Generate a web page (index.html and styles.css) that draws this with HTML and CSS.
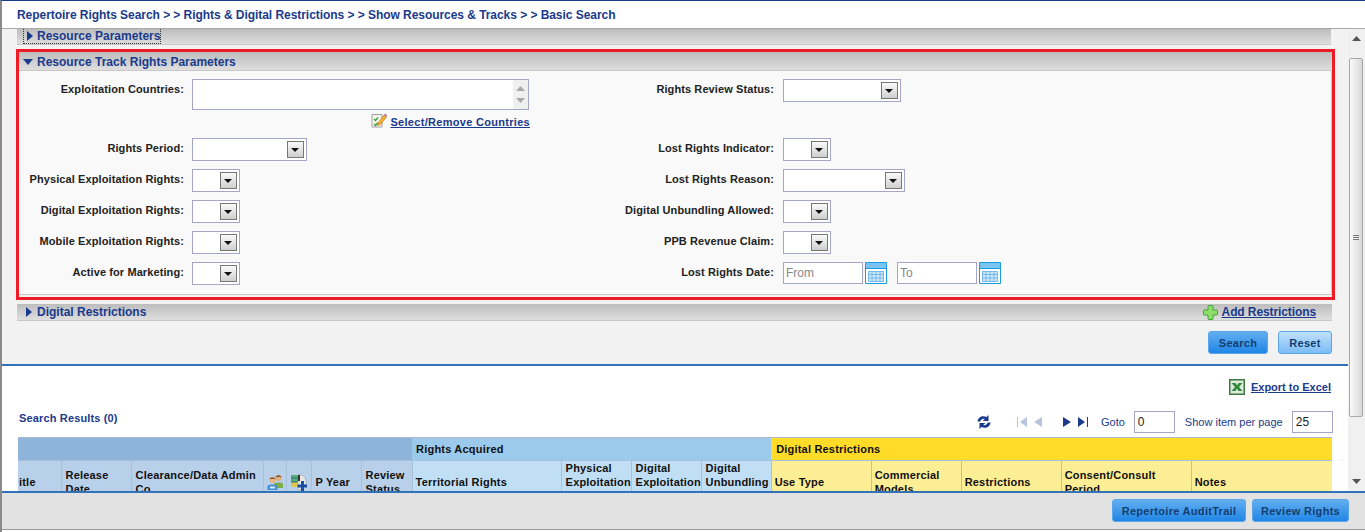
FILE: index.html
```html
<!DOCTYPE html>
<html lang="en">
<head>
    <meta charset="UTF-8">
    <title>Repertoire Rights Search</title>
    <link rel="stylesheet" href="styles.css">
</head>
<body>
    <div class="crumbs">Repertoire Rights Search &gt; &gt; Rights &amp; Digital Restrictions &gt; &gt; Show Resources &amp; Tracks &gt; &gt; Basic Search</div>

    <div class="middle">
        <div class="scroll-area">
            <div class="search-section">
                <div class="bar bar-first">
                    <span class="focus-box">
                        <svg class="tri" width="7" height="10" viewBox="0 0 7 10"><path d="M1 0L7 5L1 10Z"/></svg>
                        <span>Resource Parameters</span>
                    </span>
                </div>

                <div class="highlight">
                    <div class="bar bar-open">
                        <svg class="tri" width="10" height="7" viewBox="0 0 10 7"><path d="M0 1H10L5 7Z"/></svg>
                        <span>Resource Track Rights Parameters</span>
                    </div>
                    <div class="form-grid">
                        <label class="lbl">Exploitation Countries:</label>
                        <div class="field">
                            <div class="listbox">
                                <div class="listbox-bar">
                                    <svg width="9" height="5" viewBox="0 0 9 5"><path d="M0 5L4.500 0L9 5Z"/></svg>
                                    <svg width="9" height="5" viewBox="0 0 9 5"><path d="M0 0L4.500 5L9 0Z"/></svg>
                                </div>
                            </div>
                            <div class="select-link">
                                <svg class="note-icon" width="16" height="16" viewBox="0 0 16 16">
                                    <path d="M1 2.500H11V15H1Z" fill="#f4f4ee" stroke="#a0a0a0"/>
                                    <path d="M3 7L4.500 8.500L7 5.500M3 12L4.500 13.500L7 10.500" fill="none" stroke="#3a9a3a" stroke-width="1.200"/>
                                    <path d="M7 11L13 3L15.500 5L9.500 12.500L6.500 13.500Z" fill="#f0b030" stroke="#b87818" stroke-width=".6"/>
                                    <path d="M13 3L14.200 1.500L16 3.200L15.500 5Z" fill="#c070b0"/>
                                </svg>
                                <a href="#">Select/Remove Countries</a>
                            </div>
                        </div>
                        <label class="lbl">Rights Review Status:</label>
                        <div class="field-r"><div class="combo combo-118"><span class="combo-btn"></span></div></div>

                        <label class="lbl">Rights Period:</label>
                        <div class="field"><div class="combo combo-115"><span class="combo-btn"></span></div></div>
                        <label class="lbl">Lost Rights Indicator:</label>
                        <div class="field-r"><div class="combo"><span class="combo-btn"></span></div></div>

                        <label class="lbl">Physical Exploitation Rights:</label>
                        <div class="field"><div class="combo"><span class="combo-btn"></span></div></div>
                        <label class="lbl">Lost Rights Reason:</label>
                        <div class="field-r"><div class="combo combo-122"><span class="combo-btn"></span></div></div>

                        <label class="lbl">Digital Exploitation Rights:</label>
                        <div class="field"><div class="combo"><span class="combo-btn"></span></div></div>
                        <label class="lbl">Digital Unbundling Allowed:</label>
                        <div class="field-r"><div class="combo"><span class="combo-btn"></span></div></div>

                        <label class="lbl">Mobile Exploitation Rights:</label>
                        <div class="field"><div class="combo"><span class="combo-btn"></span></div></div>
                        <label class="lbl">PPB Revenue Claim:</label>
                        <div class="field-r"><div class="combo"><span class="combo-btn"></span></div></div>

                        <label class="lbl">Active for Marketing:</label>
                        <div class="field"><div class="combo"><span class="combo-btn"></span></div></div>
                        <label class="lbl">Lost Rights Date:</label>
                        <div class="field-r date-row">
                            <input class="date-input" type="text" placeholder="From">
                            <svg class="cal" width="22" height="22" viewBox="0 0 22 22">
                                <path d="M.5 .5H21.500V21.500H.5Z" fill="#fff" stroke="#1a9ae0"/>
                                <path d="M1 1H21V6H1Z" fill="#7cc4f4"/>
                                <path d="M1 6.500H21" stroke="#1a9ae0"/>
                                <path d="M3.500 9.500H18.500V19.500H3.500ZM3.500 12.500H18.500M3.500 16H18.500M7 9.500V19.500M11 9.500V19.500M15 9.500V19.500" fill="#cfe6fa" stroke="#74b8ee"/>
                            </svg>
                            <input class="date-input date-to" type="text" placeholder="To">
                            <svg class="cal" width="22" height="22" viewBox="0 0 22 22">
                                <path d="M.5 .5H21.500V21.500H.5Z" fill="#fff" stroke="#1a9ae0"/>
                                <path d="M1 1H21V6H1Z" fill="#7cc4f4"/>
                                <path d="M1 6.500H21" stroke="#1a9ae0"/>
                                <path d="M3.500 9.500H18.500V19.500H3.500ZM3.500 12.500H18.500M3.500 16H18.500M7 9.500V19.500M11 9.500V19.500M15 9.500V19.500" fill="#cfe6fa" stroke="#74b8ee"/>
                            </svg>
                        </div>
                    </div>
                </div>

                <div class="bar bar-digital">
                    <svg class="tri" width="7" height="10" viewBox="0 0 7 10"><path d="M1 0L7 5L1 10Z"/></svg>
                    <span class="bar-title">Digital Restrictions</span>
                    <svg width="15" height="15" viewBox="0 0 15 15"><path d="M5.500 .5H9.500C10 .5 10 1 10 1.500V5H13.500C14.500 5 14.500 5.500 14.500 6V9C14.500 9.500 14.500 10 13.500 10H10V13.500C10 14 10 14.500 9.500 14.500H5.500C5 14.500 5 14 5 13.500V10H1.500C.5 10 .5 9.500 .5 9V6C.5 5.500 .5 5 1.500 5H5V1.500C5 1 5 .5 5.500 .5Z" fill="#8ede6a" stroke="#3fa53a"/></svg>
                    <a class="add-link" href="#">Add Restrictions</a>
                </div>

                <div class="search-btns">
                    <button class="btn btn-dark" type="button">Search</button>
                    <button class="btn btn-light" type="button">Reset</button>
                </div>
            </div>

            <div class="results">
                <div class="export-row">
                    <svg width="16" height="16" viewBox="0 0 16 16">
                        <path d="M0 0H16V16H0Z" fill="#3e7a3e"/>
                        <path d="M1.500 1.500H14.500V14.500H1.500Z" fill="#dfe9dc"/>
                        <path d="M2.500 4H6.500L8 6.500L9.500 4H13.500L10 8L13.500 12H9.500L8 9.500L6.500 12H2.500L6 8Z" fill="#2f8a3a"/>
                    </svg>
                    <a href="#">Export to Excel</a>
                </div>
                <div class="toolbar">
                    <span class="results-title">Search Results (0)</span>
                    <svg class="refresh" width="14" height="14" viewBox="0 0 14 14">
                        <path d="M.5 6.500C1 2 5.500 0 9.500 2L11.500 0V6H5.500L7.800 3.900C6 3.300 3.800 4.300 3.300 6.500Z" fill="#1a3a8c"/>
                        <path d="M13.500 7.500C13 12 8.500 14 4.500 12L2.500 14V8H8.500L6.200 10.100C8 10.700 10.200 9.700 10.700 7.500Z" fill="#1a3a8c"/>
                    </svg>
                    <svg class="pg-first" width="10" height="10" viewBox="0 0 10 10"><path d="M0 0H1V10H0ZM3 5L10 0V10Z" fill="#b8c4de"/></svg>
                    <svg class="pg-prev" width="8" height="10" viewBox="0 0 8 10"><path d="M0 5L8 0V10Z" fill="#b8c4de"/></svg>
                    <svg class="pg-next" width="8" height="10" viewBox="0 0 8 10"><path d="M8 5L0 0V10Z" fill="#1a3a8c"/></svg>
                    <svg class="pg-last" width="10" height="10" viewBox="0 0 10 10"><path d="M10 0H9V10H10ZM7 5L0 0V10Z" fill="#1a3a8c"/></svg>
                    <span class="goto">Goto</span>
                    <input class="pg-input" type="text" value="0">
                    <span class="per-page">Show item per page</span>
                    <input class="pg-input" type="text" value="25">
                </div>

                <table class="grid">
                    <colgroup>
                        <col class="c43"><col class="c70"><col class="c132"><col class="c23"><col class="c25"><col class="c50"><col class="c51">
                        <col class="c149"><col class="c70"><col class="c70"><col class="c70">
                        <col class="c100"><col class="c90"><col class="c100"><col class="c130"><col class="c141">
                    </colgroup>
                    <tr class="group-row">
                        <th class="g-blank" colspan="7"></th>
                        <th class="g-rights" colspan="4">Rights Acquired</th>
                        <th class="g-digital" colspan="5">Digital Restrictions</th>
                    </tr>
                    <tr class="head-row">
                        <th class="h-blue h-cut">itle</th>
                        <th class="h-blue">Release Date</th>
                        <th class="h-blue">Clearance/Data Admin Co.</th>
                        <th class="h-blue h-icon">
                            <svg width="17" height="17" viewBox="0 0 17 17">
                                <circle cx="11.500" cy="4" r="3" fill="#e0b080"/>
                                <path d="M8.500 3.500C9 .5 14 .5 14.500 3.500C12.500 2.500 10.500 2.500 8.500 3.500Z" fill="#7a4a20"/>
                                <path d="M7 14V9.500C8 8 15 8 16 9.500V14Z" fill="#7fae4a"/>
                                <circle cx="5.500" cy="6" r="3" fill="#e8b888"/>
                                <path d="M2.500 5.500C3 2.500 8 2.500 8.500 5.500C6.500 4.500 4.500 4.500 2.500 5.500Z" fill="#8a5020"/>
                                <path d="M.5 16V11.500C2 10 9 10 10.500 11.500V16Z" fill="#3f8fd8"/>
                                <path d="M3 12.500H8V14.500H3Z" fill="#d8ecfb"/>
                            </svg>
                        </th>
                        <th class="h-blue h-icon">
                            <svg width="17" height="17" viewBox="0 0 17 17">
                                <path d="M8 1H11C15 2 16.500 6 16 10L10 16H8Z" fill="#e8e8e8" stroke="#9a9a9a" stroke-width=".6"/>
                                <path d="M1 1H8V8H1Z" fill="#55b070"/>
                                <path d="M1 8H8V13H1Z" fill="#e0c848"/>
                                <path d="M1 4H8M1 8H8" stroke="#2c6a8a"/>
                                <path d="M8 1H10V7H8Z" fill="#333"/>
                                <path d="M11 7H14V10.500H17V13.500H14V17H11V13.500H7.500V10.500H11Z" fill="#1a4fa0"/>
                            </svg>
                        </th>
                        <th class="h-blue">P Year</th>
                        <th class="h-blue">Review Status</th>
                        <th class="h-sky h-terr">Territorial Rights</th>
                        <th class="h-sky">Physical Exploitation Rights</th>
                        <th class="h-sky">Digital Exploitation Rights</th>
                        <th class="h-sky">Digital Unbundling Allowed</th>
                        <th class="h-yel">Use Type</th>
                        <th class="h-yel">Commercial Models</th>
                        <th class="h-yel">Restrictions</th>
                        <th class="h-yel">Consent/Consult Period</th>
                        <th class="h-yel">Notes</th>
                    </tr>
                </table>
            </div>
        </div>

        <div class="scrollbar">
            <svg class="sb-up" width="9" height="5" viewBox="0 0 9 5"><path d="M0 5L4.500 0L9 5Z"/></svg>
            <div class="sb-thumb"><span class="sb-grip"></span></div>
            <svg class="sb-down" width="9" height="5" viewBox="0 0 9 5"><path d="M0 0L4.500 5L9 0Z"/></svg>
        </div>
    </div>

    <div class="footer">
        <button class="btn btn-dark btn-audit" type="button">Repertoire AuditTrail</button>
        <button class="btn btn-dark btn-review" type="button">Review Rights</button>
    </div>
</body>
</html>
```

FILE: styles.css
```css
html, body {
    margin: 0;
    padding: 0;
}

body {
    width: 1365px;
    height: 532px;
    overflow: hidden;
    display: flex;
    flex-direction: column;
    box-sizing: border-box;
    background: #fff;
    border-top: 1px solid #1a3a8c;
    border-left: 2px solid #8a8a8a;
    font-family: "Liberation Sans", Arial, sans-serif;
    font-size: 11px;
    color: #222;
}

a {
    color: #1a3a8c;
}

svg {
    display: block;
    flex: none;
}

.crumbs {
    height: 28px;
    box-sizing: border-box;
    padding: 7px 0 0 15px;
    border-bottom: 1px solid #a8a8a8;
    font-size: 12px;
    font-weight: bold;
    line-height: 14px;
    letter-spacing: -0.05px;
    color: #1a3a8c;
}

.middle {
    display: flex;
    height: 462px;
}

.scroll-area {
    width: 1346px;
    overflow: hidden;
}

.search-section {
    height: 337px;
    box-sizing: border-box;
    padding: 0 16px 0 14px;
    background: #f2f2f2;
    border-bottom: 2px solid #3272b8;
}

.bar {
    display: flex;
    align-items: center;
    background: linear-gradient(#bdbdbd, #dedede);
    border-bottom: 1px solid #c8c8c8;
    font-size: 12px;
    font-weight: bold;
    color: #1a3a8c;
}

.tri {
    fill: #1a3a8c;
}

.bar-first {
    height: 16px;
    box-sizing: border-box;
    margin: 0 1px;
    padding-left: 6px;
}

.focus-box {
    display: flex;
    align-items: center;
    gap: 4px;
    height: 15px;
    box-sizing: border-box;
    padding-left: 2px;
    border: 1px dotted #333;
    border-width: 0 1px 1px;
}

.highlight {
    margin: 4px -3px 0 0;
    padding-bottom: 2px;
    border: 3px solid #ee1c25;
    background: #f2f2f2;
}

.bar-open {
    gap: 4px;
    height: 19px;
    box-sizing: border-box;
    padding: 1px 0 0 4px;
}

.form-grid {
    display: grid;
    grid-template-columns: 165px 416px 174px 1fr;
    grid-template-rows: 59px repeat(5, 31px);
    height: 224px;
    box-sizing: border-box;
    padding-top: 8px;
    background: #f9f9f9;
    border-bottom: 1px solid #c8c8c8;
    border-right: 1px solid #c8c8c8;
}

.lbl {
    padding-top: 4px;
    text-align: right;
    font-weight: bold;
    line-height: 13px;
    letter-spacing: 0.1px;
}

.field {
    padding-left: 8px;
}

.field-r {
    padding-left: 9px;
}

.listbox {
    display: flex;
    justify-content: flex-end;
    width: 337px;
    height: 31px;
    box-sizing: border-box;
    border: 1px solid #a5a5c8;
    background: #fff;
}

.listbox-bar {
    display: flex;
    flex-direction: column;
    justify-content: space-between;
    align-items: center;
    width: 15px;
    box-sizing: border-box;
    padding: 6px 0;
    background: #f0f0f0;
    fill: #a8a8a8;
}

.select-link {
    display: flex;
    justify-content: flex-end;
    align-items: center;
    gap: 3px;
    width: 338px;
    height: 16px;
    margin-top: 4px;
    font-weight: bold;
    letter-spacing: 0.3px;
}

.note-icon {
    margin-bottom: 4px;
}

.combo {
    display: flex;
    justify-content: flex-end;
    align-items: center;
    width: 48px;
    height: 23px;
    box-sizing: border-box;
    padding-right: 2px;
    border: 1px solid #a5a5c8;
    background: #fff;
}

.combo-115 {
    width: 115px;
}

.combo-118 {
    width: 118px;
}

.combo-122 {
    width: 122px;
}

.combo-btn {
    position: relative;
    width: 17px;
    height: 17px;
    box-sizing: border-box;
    border: 1px solid #777;
    background: linear-gradient(#fafafa, #cfcfcf);
}

.combo-btn::after {
    content: "";
    position: absolute;
    left: 3px;
    top: 6px;
    border-style: solid;
    border-width: 4px 4px 0;
    border-color: #111 transparent transparent;
}

.date-row {
    display: flex;
    gap: 2px;
}

.date-input {
    width: 80px;
    height: 22px;
    box-sizing: border-box;
    padding: 0 2px;
    border: 1px solid #a5a5c8;
    font-family: inherit;
    font-size: 12px;
}

.date-input::placeholder {
    color: #888;
}

.date-to {
    margin-left: 8px;
}

.bar-digital {
    gap: 5px;
    height: 17px;
    margin: 4px 0 0 1px;
    padding-left: 8px;
    box-sizing: border-box;
}

.bar-title {
    flex: 1;
}

.add-link {
    margin: 0 16px 0 -1px;
    letter-spacing: -0.1px;
}

.search-btns {
    display: flex;
    justify-content: flex-end;
    gap: 10px;
    margin-top: 10px;
}

.btn {
    height: 23px;
    padding: 0;
    border: 1px solid #5aa5ea;
    border-radius: 3px;
    font-family: inherit;
    font-size: 11px;
    font-weight: bold;
    letter-spacing: 0.3px;
    color: #123f70;
}

.btn-dark {
    width: 60px;
    background: linear-gradient(#62aef0, #2186e6);
}

.btn-light {
    width: 54px;
    background: linear-gradient(#c0e0fb, #7cbcf5);
}

.results {
    height: 125px;
    overflow: hidden;
}

.export-row {
    display: flex;
    justify-content: flex-end;
    align-items: center;
    gap: 6px;
    height: 16px;
    padding: 13px 17px 0 0;
    font-weight: bold;
}

.toolbar {
    display: flex;
    align-items: center;
    height: 22px;
    margin-top: 16px;
    padding-left: 17px;
    color: #1a3a8c;
}

.results-title {
    width: 958px;
    padding-bottom: 8px;
    font-weight: bold;
    letter-spacing: 0.15px;
}

.pg-first {
    margin-left: 26px;
}

.pg-prev {
    margin-left: 7px;
}

.pg-next {
    margin-left: 21px;
}

.pg-last {
    margin-left: 7px;
}

.goto {
    margin: 0 9px 0 13px;
}

.per-page {
    margin: 0 9px 0 10px;
}

.pg-input {
    width: 41px;
    height: 22px;
    box-sizing: border-box;
    padding: 0 3px;
    border: 1px solid #a5a5c8;
    font-family: inherit;
    font-size: 12px;
    color: #222;
}

.grid {
    width: 1314px;
    margin: 4px 0 0 16px;
    border-collapse: collapse;
    table-layout: fixed;
    border-top: 1px solid #b0b8c8;
}

.c23 { width: 23px; }
.c25 { width: 25px; }
.c43 { width: 43px; }
.c50 { width: 50px; }
.c51 { width: 51px; }
.c70 { width: 70px; }
.c90 { width: 90px; }
.c100 { width: 100px; }
.c130 { width: 130px; }
.c132 { width: 132px; }
.c141 { width: 141px; }
.c149 { width: 149px; }

.grid th {
    padding: 0 2px 0 4px;
    overflow: hidden;
    text-align: left;
    font-size: 11px;
    line-height: 14px;
    letter-spacing: 0.2px;
    color: #111;
}

.group-row th {
    height: 22px;
}

.g-blank {
    background: #8fb4dc;
}

.g-rights {
    background: #9bcaed;
}

.grid .g-digital {
    padding-left: 5px;
    background: #ffdc28;
}

.head-row th {
    height: 42px;
    border-left: 1px solid #a8c0dc;
    border-top: 1px solid #a8c0dc;
}

.grid .h-cut {
    padding-left: 1px;
    border-left: 0;
}

.h-blue {
    background: #b8d0ea;
}

.h-sky {
    background: #c0dff5;
}

.grid .h-terr {
    padding-left: 3px;
}

.grid .h-yel {
    padding-left: 3px;
    background: #fcee94;
}

.grid .h-icon {
    padding: 0 0 0 3px;
}

.scrollbar {
    position: relative;
    width: 17px;
    background: #f0f0f0;
    fill: #555;
}

.sb-up {
    position: absolute;
    left: 4px;
    top: 7px;
}

.sb-down {
    position: absolute;
    left: 4px;
    top: 450px;
}

.sb-thumb {
    position: absolute;
    left: 1px;
    top: 29px;
    display: flex;
    align-items: center;
    justify-content: center;
    width: 14px;
    height: 359px;
    box-sizing: border-box;
    border: 1px solid #a8a8a8;
    border-radius: 2px;
    background: linear-gradient(90deg, #fafafa, #d8d8d8);
}

.sb-grip {
    width: 6px;
    height: 6px;
    background: repeating-linear-gradient(#777 0 1px, transparent 1px 2px);
}

.footer {
    display: flex;
    justify-content: flex-end;
    gap: 6px;
    height: 39px;
    box-sizing: border-box;
    padding: 6px 16px 0 0;
    background: #e2e2e2;
    border-top: 2px solid #3272b8;
    border-bottom: 1px solid #999;
}

.btn-audit {
    width: 134px;
}

.btn-review {
    width: 97px;
}
```
